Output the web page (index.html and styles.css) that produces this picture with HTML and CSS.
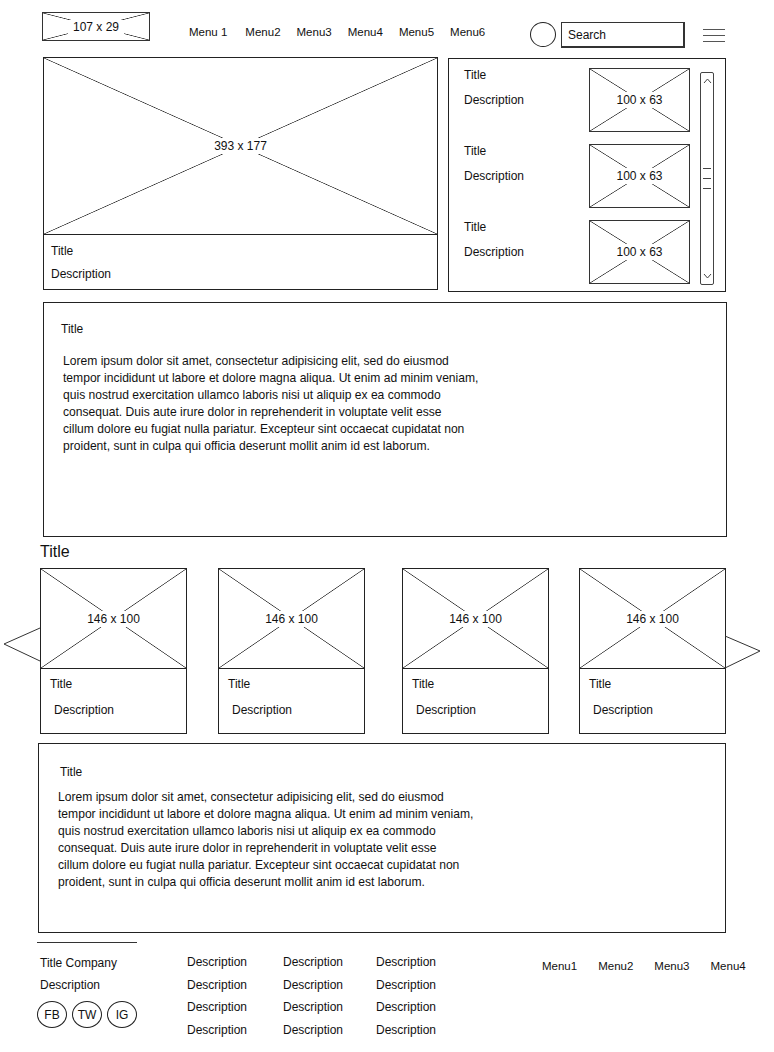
FILE: index.html
```html
<!DOCTYPE html>
<html lang="en">
<head>
    <meta charset="UTF-8">
    <meta name="viewport" content="width=device-width, initial-scale=1.0">
    <title>Wireframe</title>
    <link rel="stylesheet" href="styles.css">
</head>
<body>
    <header class="header">
        <div class="ph logo"><span>107 x 29</span></div>
        <nav class="nav">
            <a>Menu 1</a>
            <a>Menu2</a>
            <a>Menu3</a>
            <a>Menu4</a>
            <a>Menu5</a>
            <a>Menu6</a>
        </nav>
        <div class="avatar"></div>
        <div class="search">Search</div>
        <div class="burger"><span></span><span></span><span></span></div>
    </header>

    <section class="top-row">
        <div class="hero">
            <div class="ph hero-img"><span>393 x 177</span></div>
            <div class="hero-text">
                <div class="title">Title</div>
                <div class="desc">Description</div>
            </div>
        </div>

        <div class="side-panel">
            <div class="side-list">
                <div class="side-item">
                    <div class="side-text">
                        <div class="title">Title</div>
                        <div class="desc">Description</div>
                    </div>
                    <div class="ph thumb"><span>100 x 63</span></div>
                </div>
                <div class="side-item">
                    <div class="side-text">
                        <div class="title">Title</div>
                        <div class="desc">Description</div>
                    </div>
                    <div class="ph thumb"><span>100 x 63</span></div>
                </div>
                <div class="side-item">
                    <div class="side-text">
                        <div class="title">Title</div>
                        <div class="desc">Description</div>
                    </div>
                    <div class="ph thumb"><span>100 x 63</span></div>
                </div>
            </div>
            <div class="scrollbar">
                <svg width="9" height="6" viewBox="0 0 9 6"><path d="M1 5 L4.5 1 L8 5" fill="none" stroke="#444"/></svg>
                <div class="thumb-grip"><span></span><span></span><span></span></div>
                <svg width="9" height="6" viewBox="0 0 9 6"><path d="M1 1 L4.5 5 L8 1" fill="none" stroke="#444"/></svg>
            </div>
        </div>
    </section>

    <section class="text-box first">
        <div class="title">Title</div>
        <p class="lorem">Lorem ipsum dolor sit amet, consectetur adipisicing elit, sed do eiusmod<br>
            tempor incididunt ut labore et dolore magna aliqua. Ut enim ad minim veniam,<br>
            quis nostrud exercitation ullamco laboris nisi ut aliquip ex ea commodo<br>
            consequat. Duis aute irure dolor in reprehenderit in voluptate velit esse<br>
            cillum dolore eu fugiat nulla pariatur. Excepteur sint occaecat cupidatat non<br>
            proident, sunt in culpa qui officia deserunt mollit anim id est laborum.</p>
    </section>

    <h2 class="section-title">Title</h2>

    <section class="carousel">
        <svg class="arrow left" width="38" height="36" viewBox="0 0 38 36"><path d="M37 1 L1 17 L37 34" fill="none" stroke="#333"/></svg>
        <div class="card">
            <div class="ph card-img"><span>146 x 100</span></div>
            <div class="title">Title</div>
            <div class="desc">Description</div>
        </div>
        <div class="card">
            <div class="ph card-img"><span>146 x 100</span></div>
            <div class="title">Title</div>
            <div class="desc">Description</div>
        </div>
        <div class="card">
            <div class="ph card-img"><span>146 x 100</span></div>
            <div class="title">Title</div>
            <div class="desc">Description</div>
        </div>
        <div class="card">
            <div class="ph card-img"><span>146 x 100</span></div>
            <div class="title">Title</div>
            <div class="desc">Description</div>
        </div>
        <svg class="arrow right" width="38" height="36" viewBox="0 0 38 36"><path d="M1 1 L36 16 L1 33" fill="none" stroke="#333"/></svg>
    </section>

    <section class="text-box second">
        <div class="title">Title</div>
        <p class="lorem">Lorem ipsum dolor sit amet, consectetur adipisicing elit, sed do eiusmod<br>
            tempor incididunt ut labore et dolore magna aliqua. Ut enim ad minim veniam,<br>
            quis nostrud exercitation ullamco laboris nisi ut aliquip ex ea commodo<br>
            consequat. Duis aute irure dolor in reprehenderit in voluptate velit esse<br>
            cillum dolore eu fugiat nulla pariatur. Excepteur sint occaecat cupidatat non<br>
            proident, sunt in culpa qui officia deserunt mollit anim id est laborum.</p>
    </section>

    <footer class="footer">
        <div class="brand">
            <div class="rule"></div>
            <div class="brand-title">Title Company</div>
            <div class="brand-desc">Description</div>
            <div class="socials">
                <span>FB</span>
                <span>TW</span>
                <span>IG</span>
            </div>
        </div>
        <div class="links">
            <a>Description</a><a>Description</a><a>Description</a>
            <a>Description</a><a>Description</a><a>Description</a>
            <a>Description</a><a>Description</a><a>Description</a>
            <a>Description</a><a>Description</a><a>Description</a>
        </div>
        <nav class="footer-nav">
            <a>Menu1</a>
            <a>Menu2</a>
            <a>Menu3</a>
            <a>Menu4</a>
        </nav>
    </footer>
</body>
</html>
```

FILE: styles.css
```css
body {
    margin: 0;
    width: 774px;
    font-family: "Liberation Sans", Arial, sans-serif;
    font-size: 12px;
    color: #111;
    background-color: #fff;
}
a {
    color: #111;
}

/* placeholder image: box with an X */
.ph {
    box-sizing: border-box;
    border: 1px solid #333;
    display: flex;
    align-items: center;
    justify-content: center;
    background:
        linear-gradient(to top right, transparent calc(50% - 0.7px), #333 50%, transparent calc(50% + 0.7px)),
        linear-gradient(to bottom right, transparent calc(50% - 0.7px), #333 50%, transparent calc(50% + 0.7px));
}
.ph span {
    background-color: #fff;
    padding: 1px 4px;
    line-height: 14px;
}

.title {
    line-height: 14px;
}
.desc {
    line-height: 14px;
}

/* header */
.header {
    display: flex;
    align-items: flex-start;
    height: 45px;
    padding: 12px 49px 0 42px;
}
.logo {
    width: 108px;
    height: 29px;
}
.logo span {
    padding: 0 5px;
}
.nav {
    display: flex;
    gap: 16px;
    margin: 13px 0 0 39px;
    font-size: 11.5px;
}
.nav a {
    line-height: 14px;
}
.nav a:first-child {
    margin-right: 2px;
}
.avatar {
    box-sizing: border-box;
    width: 26px;
    height: 25px;
    margin: 10px 0 0 auto;
    border: 1px solid #222;
    border-radius: 50%;
}
.search {
    box-sizing: border-box;
    width: 124px;
    height: 26px;
    margin: 10px 0 0 5px;
    padding: 5px 6px;
    border: 1px solid #333;
    border-bottom-width: 2px;
    border-right-width: 2px;
    line-height: 14px;
}
.burger {
    display: flex;
    flex-direction: column;
    gap: 5px;
    width: 22px;
    margin: 17px 0 0 18px;
}
.burger span {
    height: 1px;
    background-color: #555;
}

/* top row */
.top-row {
    display: flex;
    align-items: flex-start;
    gap: 10px;
    padding-left: 43px;
}
.hero {
    box-sizing: border-box;
    width: 395px;
    height: 233px;
    border: 1px solid #222;
}
.hero .hero-img {
    width: 100%;
    height: 177px;
    border: none;
    border-bottom: 1px solid #222;
}
.hero-text {
    padding: 9px 0 0 7px;
}
.hero-text .desc {
    margin-top: 9px;
}
.side-panel {
    box-sizing: border-box;
    display: flex;
    width: 278px;
    height: 234px;
    margin-top: 1px;
    border: 1px solid #222;
}
.side-list {
    padding: 9px 0 0 15px;
}
.side-item {
    display: flex;
    height: 76px;
}
.side-text {
    width: 125px;
}
.side-text .desc {
    margin-top: 11px;
}
.thumb {
    width: 101px;
    height: 64px;
}
.scrollbar {
    box-sizing: border-box;
    display: flex;
    flex-direction: column;
    align-items: center;
    justify-content: space-between;
    width: 14px;
    margin: 13px 0 6px 10px;
    padding: 5px 0;
    border: 1px solid #444;
    border-radius: 2px;
}
.thumb-grip {
    display: flex;
    flex-direction: column;
    gap: 9px;
    width: 8px;
}
.thumb-grip span {
    height: 1px;
    background-color: #444;
}

/* text boxes */
.text-box {
    box-sizing: border-box;
    border: 1px solid #222;
}
.text-box.first {
    width: 684px;
    height: 235px;
    margin: 10px 0 0 43px;
    padding: 19px 0 0 17px;
}
.text-box.second {
    width: 688px;
    height: 190px;
    margin: 9px 0 0 38px;
    padding: 21px 0 0 21px;
}
.lorem {
    margin: 17px 0 0 2px;
    line-height: 17px;
    font-size: 12.1px;
}
.text-box.second .lorem {
    margin: 10px 0 0 -2px;
}

.section-title {
    margin: 6px 0 0 40px;
    font-size: 16px;
    font-weight: normal;
    line-height: 18px;
}

/* carousel */
.carousel {
    position: relative;
    display: flex;
    width: 686px;
    margin: 7px 0 0 40px;
}
.card {
    box-sizing: border-box;
    width: 147px;
    height: 166px;
    border: 1px solid #222;
}
.card + .card {
    margin-left: 31px;
}
.card:nth-of-type(3) {
    margin-left: 37px;
}
.card:nth-of-type(4) {
    margin-left: 30px;
}
.card .card-img {
    width: 100%;
    height: 100px;
    border: none;
    border-bottom: 1px solid #222;
}
.card .title {
    margin: 8px 0 0 9px;
}
.card .desc {
    margin: 12px 0 0 13px;
}
.arrow {
    position: absolute;
    top: 59px;
}
.arrow.left {
    left: -37px;
}
.arrow.right {
    right: -36px;
    top: 67px;
}

/* footer */
.footer {
    display: flex;
    align-items: flex-start;
    margin-top: 9px;
    padding-left: 37px;
}
.brand {
    width: 150px;
}
.rule {
    width: 100px;
    height: 1px;
    background-color: #333;
}
.brand-title {
    margin: 13px 0 0 3px;
    line-height: 14px;
}
.brand-desc {
    margin: 8px 0 0 3px;
    line-height: 14px;
}
.socials {
    display: flex;
    gap: 5px;
    margin-top: 9px;
}
.socials span {
    box-sizing: border-box;
    display: flex;
    align-items: center;
    justify-content: center;
    width: 30px;
    height: 27px;
    border: 1px solid #222;
    border-radius: 50%;
}
.links {
    display: grid;
    grid-template-columns: 96px 93px 90px;
    grid-auto-rows: 22.7px;
    margin-top: 13px;
}
.links a {
    line-height: 14px;
}
.footer-nav {
    display: flex;
    gap: 21px;
    margin: 17px 0 0 76px;
    font-size: 11.5px;
}
.footer-nav a {
    line-height: 14px;
}
```
